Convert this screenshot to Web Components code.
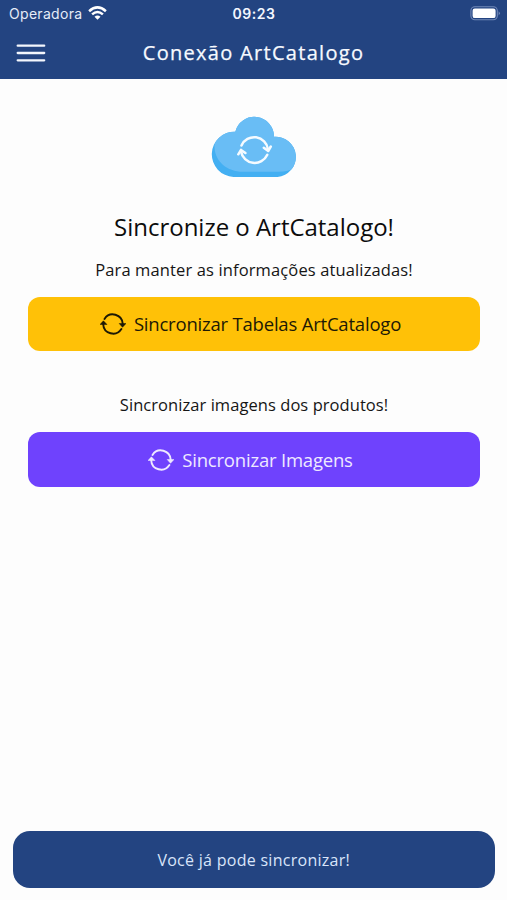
<!DOCTYPE html>
<html lang="pt"><head><meta charset="utf-8"><title>Conexão ArtCatalogo</title>
<style>html,body{margin:0;height:100%;background:#fdfdfd}</style></head><body>
<catalog-app></catalog-app>
<script>
function define(name, html) {
  const t = document.createElement('template');
  t.innerHTML = html;
  customElements.define(name, class extends HTMLElement {
    constructor() {
      super();
      this.attachShadow({mode: 'open'}).append(t.content.cloneNode(true));
    }
  });
}

define('status-bar', `
<style>
:host{display:grid;grid-template-columns:1fr auto 1fr;align-items:center;height:26px;padding:2px 6px 0 9px;box-sizing:border-box;font:400 14px/20px Inter,sans-serif;color:#e6ecf8}
.left{display:flex;align-items:center;gap:6px;letter-spacing:.3px}
.time{font-weight:600;letter-spacing:.55px;color:#f4f7ff;padding-right:2px}
.right{display:flex;justify-content:flex-end}
svg{display:block}
</style>
<div class="left"><span>Operadora</span>
<svg width="19" height="14" viewBox="0 0 19 14" fill="none" stroke="#fff" stroke-width="2.5" style="margin-top:-2px"><path d="M1.1 5.2Q9.5-2.4 17.9 5.2M4.1 8.4Q9.5 3.5 14.9 8.4"/><path d="M6.5 10.8Q9.5 8 12.5 10.8L9.5 13.8Z" fill="#fff" stroke="none"/></svg></div>
<span class="time">09:23</span>
<div class="right"><svg width="31" height="15" viewBox="0 0 31 15" style="margin-top:-2px"><rect x=".9" y=".8" width="26.4" height="13" rx="4" fill="none" stroke="#7289b8" stroke-width="1.1"/><rect x="2.6" y="2.5" width="23" height="9.6" rx="2.2" fill="#fff"/><path d="M28.6 5.2Q31.2 7.3 28.6 9.4Z" fill="#7289b8"/></svg></div>`);

define('nav-bar', `
<style>
:host{display:grid;grid-template-columns:60px 1fr 60px;align-items:center;height:53px;color:#f7faff;font:400 20px/30px "Open Sans",sans-serif;letter-spacing:1.3px;-webkit-text-stroke:.25px}
svg{display:block;margin-left:16px}
.title{text-align:center;white-space:nowrap;padding-top:1px}
</style>
<svg width="30" height="20" viewBox="0 0 30 20" stroke="#f3f6fd" stroke-width="2.3" stroke-linecap="round"><path d="M1.7 2.7H28.2M1.7 10H28.2M1.7 17.3H28.2"/></svg>
<div class="title"><slot></slot></div>`);

define('cloud-logo', `
<style>:host{display:block;width:88px;height:64px}svg{display:block}</style>
<svg width="88" height="64" viewBox="0 0 88 64">
<defs><clipPath id="c"><path d="M23.5 62.9A22.6 22.6 0 0 1 25.3 17.7A19.65 19.65 0 0 1 64 22.8A20 20 0 0 1 67.5 62.9Z"/></clipPath></defs>
<g clip-path="url(#c)"><rect width="88" height="64" fill="#43aff2"/><path d="M30 57.7C14 56 4 45 4.5 31C6 20 16 16 24 17L24-2H90V50Q82 57.7 68 57.7Z" fill="#69bdf5"/></g>
<g fill="none" stroke="#f6fbff" stroke-width="2.5" stroke-linecap="round" stroke-linejoin="round"><path d="M31.5 31.5A13.9 13.9 0 0 1 58 35.3M57.3 40.8A13.9 13.9 0 0 1 31 37.5"/><path d="M53.8 33.7L58.2 37L60.8 32.5M28.3 40.3L31 35.9L35.4 39"/></g></svg>`);

define('sync-icon', `
<style>:host{display:block;width:26px;height:22px}svg{display:block}</style>
<svg width="26" height="22" viewBox="0 0 26 22" fill="currentColor"><g fill="none" stroke="currentColor" stroke-width="1.9" stroke-linecap="round"><path d="M4.5 5.9A9.9 9.9 0 0 1 22.7 10.8M21.4 16.1A9.9 9.9 0 0 1 3.2 11.2"/></g><path d="M19.2 10.5H26L22.5 14.3ZM0 11.5L3.4 7.8L7 11.5Z" stroke="currentColor" stroke-width=".5" stroke-linejoin="round"/></svg>`);

define('sync-button', `
<style>
:host{display:flex;align-items:center;justify-content:center;gap:8px;height:54.5px;padding-right:7px;border-radius:12px;background:var(--bg);color:var(--fg);font:400 18.5px/28px "Open Sans",sans-serif;letter-spacing:-.2px;box-sizing:border-box;white-space:nowrap}
span,sync-icon{padding-top:var(--drop,0)}
</style><sync-icon></sync-icon><span><slot></slot></span>`);

define('toast-message', `
<style>
:host{display:flex;align-items:center;justify-content:center;height:57px;padding-top:2px;box-sizing:border-box;border-radius:17px;background:#234481;color:#d9e5fa;font:400 16px/24px "Open Sans",sans-serif;letter-spacing:.28px;white-space:nowrap}
</style><span><slot></slot></span>`);

define('catalog-app', `
<style>
:host{display:flex;flex-direction:column;height:900px;width:507px;background:#fdfdfd;overflow:hidden}
header{background:#234481}
main{flex:1;display:flex;flex-direction:column;padding:35px 27px 0 28px;color:#151515}
cloud-logo{align-self:center}
h1,p{margin:0;text-align:center;white-space:nowrap;font-family:"Open Sans",sans-serif;font-weight:400}
h1{font-size:24px;line-height:34px;letter-spacing:-.02px;margin-top:31.5px;color:#0c0c0c}
p{font-size:16.5px;line-height:24px;letter-spacing:.13px}
.a{margin-top:14px;margin-bottom:15px}
.b{margin-top:42px;margin-bottom:15px;letter-spacing:.06px}
.y{--bg:#ffc107;--fg:#1d1905}
.v{--bg:#6f42fd;--fg:#eee9ff;--drop:1px}
footer{padding:0 12.5px 12.5px 13px}
</style>
<header><status-bar></status-bar><nav-bar>Conexão ArtCatalogo</nav-bar></header>
<main><cloud-logo></cloud-logo>
<h1>Sincronize o ArtCatalogo!</h1>
<p class="a">Para manter as informações atualizadas!</p>
<sync-button class="y">Sincronizar Tabelas ArtCatalogo</sync-button>
<p class="b">Sincronizar imagens dos produtos!</p>
<sync-button class="v">Sincronizar Imagens</sync-button></main>
<footer><toast-message>Você já pode sincronizar!</toast-message></footer>`);
</script></body></html>
